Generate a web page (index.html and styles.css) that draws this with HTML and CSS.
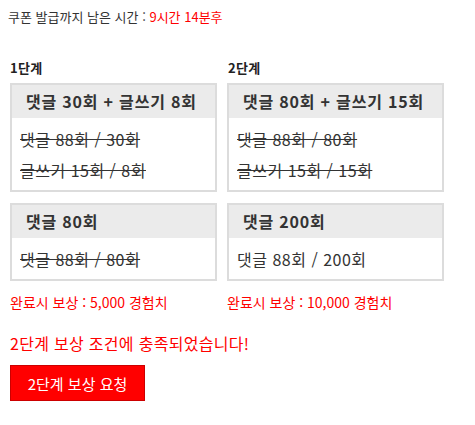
FILE: index.html
```html
<!DOCTYPE html>
<html lang="ko">
<head>
<meta charset="utf-8">
<link rel="stylesheet" href="styles.css">
</head>
<body>
<div class="page">
  <p class="timer">쿠폰 발급까지 남은 시간 : <span class="red">9시간 14분후</span></p>
  <div class="stages">
    <div class="col col-left">
      <h3 class="label">1단계</h3>
      <div class="box">
        <div class="head">댓글 30회 + 글쓰기 8회</div>
        <div class="body">
          <p class="line done">댓글 88회 / 30회</p>
          <p class="line done">글쓰기 15회 / 8회</p>
        </div>
      </div>
      <div class="box box2">
        <div class="head">댓글 80회</div>
        <div class="body">
          <p class="line done">댓글 88회 / 80회</p>
        </div>
      </div>
      <p class="reward">완료시 보상 : 5,000 경험치</p>
    </div>
    <div class="col col-right">
      <h3 class="label">2단계</h3>
      <div class="box">
        <div class="head">댓글 80회 + 글쓰기 15회</div>
        <div class="body">
          <p class="line done">댓글 88회 / 80회</p>
          <p class="line done">글쓰기 15회 / 15회</p>
        </div>
      </div>
      <div class="box box2">
        <div class="head">댓글 200회</div>
        <div class="body">
          <p class="line">댓글 88회 / 200회</p>
        </div>
      </div>
      <p class="reward">완료시 보상 : 10,000 경험치</p>
    </div>
  </div>
  <p class="msg">2단계 보상 조건에 충족되었습니다!</p>
  <button class="btn" type="button">2단계 보상 요청</button>
</div>
</body>
</html>
```

FILE: styles.css
```css
html, body {
  margin: 0;
  padding: 0;
  background: #fff;
}
body {
  font-family: "Noto Sans CJK KR", "Liberation Sans", sans-serif;
  color: #333;
  font-size: 13px;
}
.page {
  padding: 9px 0 0 8px;
}
.timer {
  margin: 0;
  line-height: 16px;
  font-size: 13px;
  color: #333;
}
.red {
  color: #f00;
}
.stages {
  display: flex;
  margin-top: 35px;
  padding-left: 2px;
}
.col-left {
  width: 207px;
  margin-right: 10px;
}
.col-right {
  width: 217px;
}
.col-right .label {
  padding-left: 1px;
}
.label {
  margin: 0 0 7px;
  font-size: 13px;
  letter-spacing: 0.3px;
  font-weight: bold;
  line-height: 16px;
  color: #222;
}
.box {
  border: 2px solid #dcdcdc;
  background: #fff;
}
.box2 {
  margin-top: 11px;
}
.head {
  background: #ebebeb;
  height: 33px;
  line-height: 33px;
  padding-left: 14px;
  font-size: 16px;
  letter-spacing: 0.8px;
  font-weight: bold;
  color: #333;
}
.body {
  padding: 6px 0 4px 8px;
}
.line {
  margin: 0;
  line-height: 31px;
  font-size: 16px;
  letter-spacing: 0.5px;
  color: #333;
}
.done {
  text-decoration: line-through;
}
.reward {
  margin: 11px 0 0;
  line-height: 20px;
  font-size: 14px;
  color: #f00;
}
.msg {
  margin: 21px 0 0 2px;
  line-height: 20px;
  font-size: 16px;
  letter-spacing: 0.3px;
  color: #f00;
}
.btn {
  display: block;
  margin: 12px 0 0 2px;
  width: 135px;
  height: 36px;
  background: #f00;
  border: 1px solid #c00;
  color: #fff;
  font-family: "Noto Sans CJK KR", "Liberation Sans", sans-serif;
  font-size: 15px;
  padding: 0;
}
```
